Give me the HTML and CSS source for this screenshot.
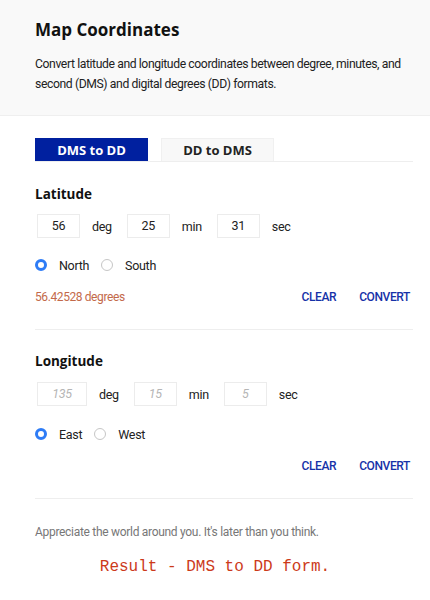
FILE: index.html
```html
<!DOCTYPE html>
<html>
<head>
<meta charset="utf-8">
<link rel="stylesheet" href="styles.css">
</head>
<body>
<header class="header">
  <h1 class="title">Map Coordinates</h1>
  <p class="intro">Convert latitude and longitude coordinates between degree, minutes, and second (DMS) and digital degrees (DD) formats.</p>
</header>
<main class="main">
  <div class="tabs">
    <div class="tab tab-active">DMS to DD</div>
    <div class="tab">DD to DMS</div>
  </div>

  <section class="section">
    <h2 class="section-title">Latitude</h2>
    <div class="fields">
      <div class="box">56</div><span class="unit">deg</span>
      <div class="box">25</div><span class="unit">min</span>
      <div class="box">31</div><span class="unit">sec</span>
    </div>
    <div class="radios">
      <span class="radio radio-on"></span><span class="radio-label">North</span>
      <span class="radio"></span><span class="radio-label">South</span>
    </div>
    <div class="actions">
      <span class="result">56.42528 degrees</span>
      <span class="btn">CLEAR</span>
      <span class="btn">CONVERT</span>
    </div>
  </section>

  <section class="section">
    <h2 class="section-title">Longitude</h2>
    <div class="fields">
      <div class="box box-wide ph">135</div><span class="unit">deg</span>
      <div class="box ph">15</div><span class="unit">min</span>
      <div class="box ph">5</div><span class="unit">sec</span>
    </div>
    <div class="radios">
      <span class="radio radio-on"></span><span class="radio-label">East</span>
      <span class="radio"></span><span class="radio-label">West</span>
    </div>
    <div class="actions">
      <span class="result"></span>
      <span class="btn">CLEAR</span>
      <span class="btn">CONVERT</span>
    </div>
  </section>

  <p class="footer">Appreciate the world around you. It's later than you think.</p>
</main>
<p class="caption">Result - DMS to DD form.</p>
</body>
</html>
```

FILE: styles.css
```css
* { box-sizing: border-box; }
html, body { margin: 0; padding: 0; background: #fff; }
body { font-family: Roboto, "Liberation Sans", sans-serif; color: #222; width: 430px; }

.header {
  background: #f9f9f9;
  border-bottom: 1px solid #efefef;
  height: 116px;
  padding: 18px 15px 0 35px;
}
.title {
  margin: 0;
  font-family: "Open Sans", sans-serif;
  font-weight: 700;
  font-size: 17px;
  line-height: 24px;
  color: #111;
}
.intro {
  margin: 12px 0 0;
  font-size: 12.2px;
  letter-spacing: -0.4px;
  line-height: 20px;
  color: #222;
}

.main { padding: 22px 17px 0 35px; }

.tabs {
  display: flex;
  gap: 13px;
  border-bottom: 1px solid #eeeeee;
}
.tab {
  width: 113px;
  height: 23px;
  line-height: 23px;
  text-align: center;
  font-family: "Open Sans", sans-serif;
  font-weight: 700;
  font-size: 13px;
  background: #f8f8f8;
  border: 1px solid #f0f0f0;
  border-bottom: none;
  color: #222;
}
.tab-active {
  background: #00209f;
  border-color: #00209f;
  color: #fff;
}

.section { padding-top: 22px; padding-bottom: 23px; border-bottom: 1px solid #eeeeee; }
.section + .section { padding-top: 21px; }
.section-title {
  margin: 0;
  font-family: "Open Sans", sans-serif;
  font-weight: 700;
  font-size: 13.5px;
  line-height: 20px;
  color: #111;
}

.fields {
  display: flex;
  align-items: center;
  margin-top: 10px;
  padding-left: 2px;
  font-size: 12.5px;
  letter-spacing: -0.3px;
}
.section + .section .fields { margin-top: 11px; }
.box {
  width: 43px;
  height: 24px;
  border: 1px solid #ececec;
  text-align: center;
  line-height: 22px;
  color: #222;
}
.box-wide { width: 50px; }
.ph { color: #b5b5b5; font-style: italic; }
.unit {
  margin: 0 15px 0 12px;
  color: #222;
}

.radios {
  display: flex;
  align-items: center;
  margin-top: 18px;
  height: 18px;
  font-size: 12.5px;
  letter-spacing: -0.3px;
}
.section + .section .radios { margin-top: 19px; }
.radio {
  width: 12px;
  height: 12px;
  border-radius: 50%;
  border: 1px solid #c6c6c6;
  background: #fff;
  margin-right: 12px;
}
.radio-on {
  border: 3.5px solid #2e7cf6;
  background: #fff;
}
.radio-label { margin-right: 12px; color: #222; }

.actions {
  display: flex;
  align-items: center;
  margin-top: 14px;
  height: 18px;
  font-size: 12px;
  letter-spacing: -0.4px;
}
.result { color: #c3694a; flex: 1; }
.btn { color: #1632a8; font-weight: 500; margin-right: 3px; }
.btn + .btn { margin-left: 20px; }

.footer {
  margin: 0;
  padding-top: 26px;
  font-size: 12px;
  letter-spacing: -0.3px;
  color: #777;
}
.caption {
  margin: 19px 0 0;
  text-align: center;
  font-family: "Liberation Mono", monospace;
  font-size: 16px;
  color: #cc3a1a;
}
```
